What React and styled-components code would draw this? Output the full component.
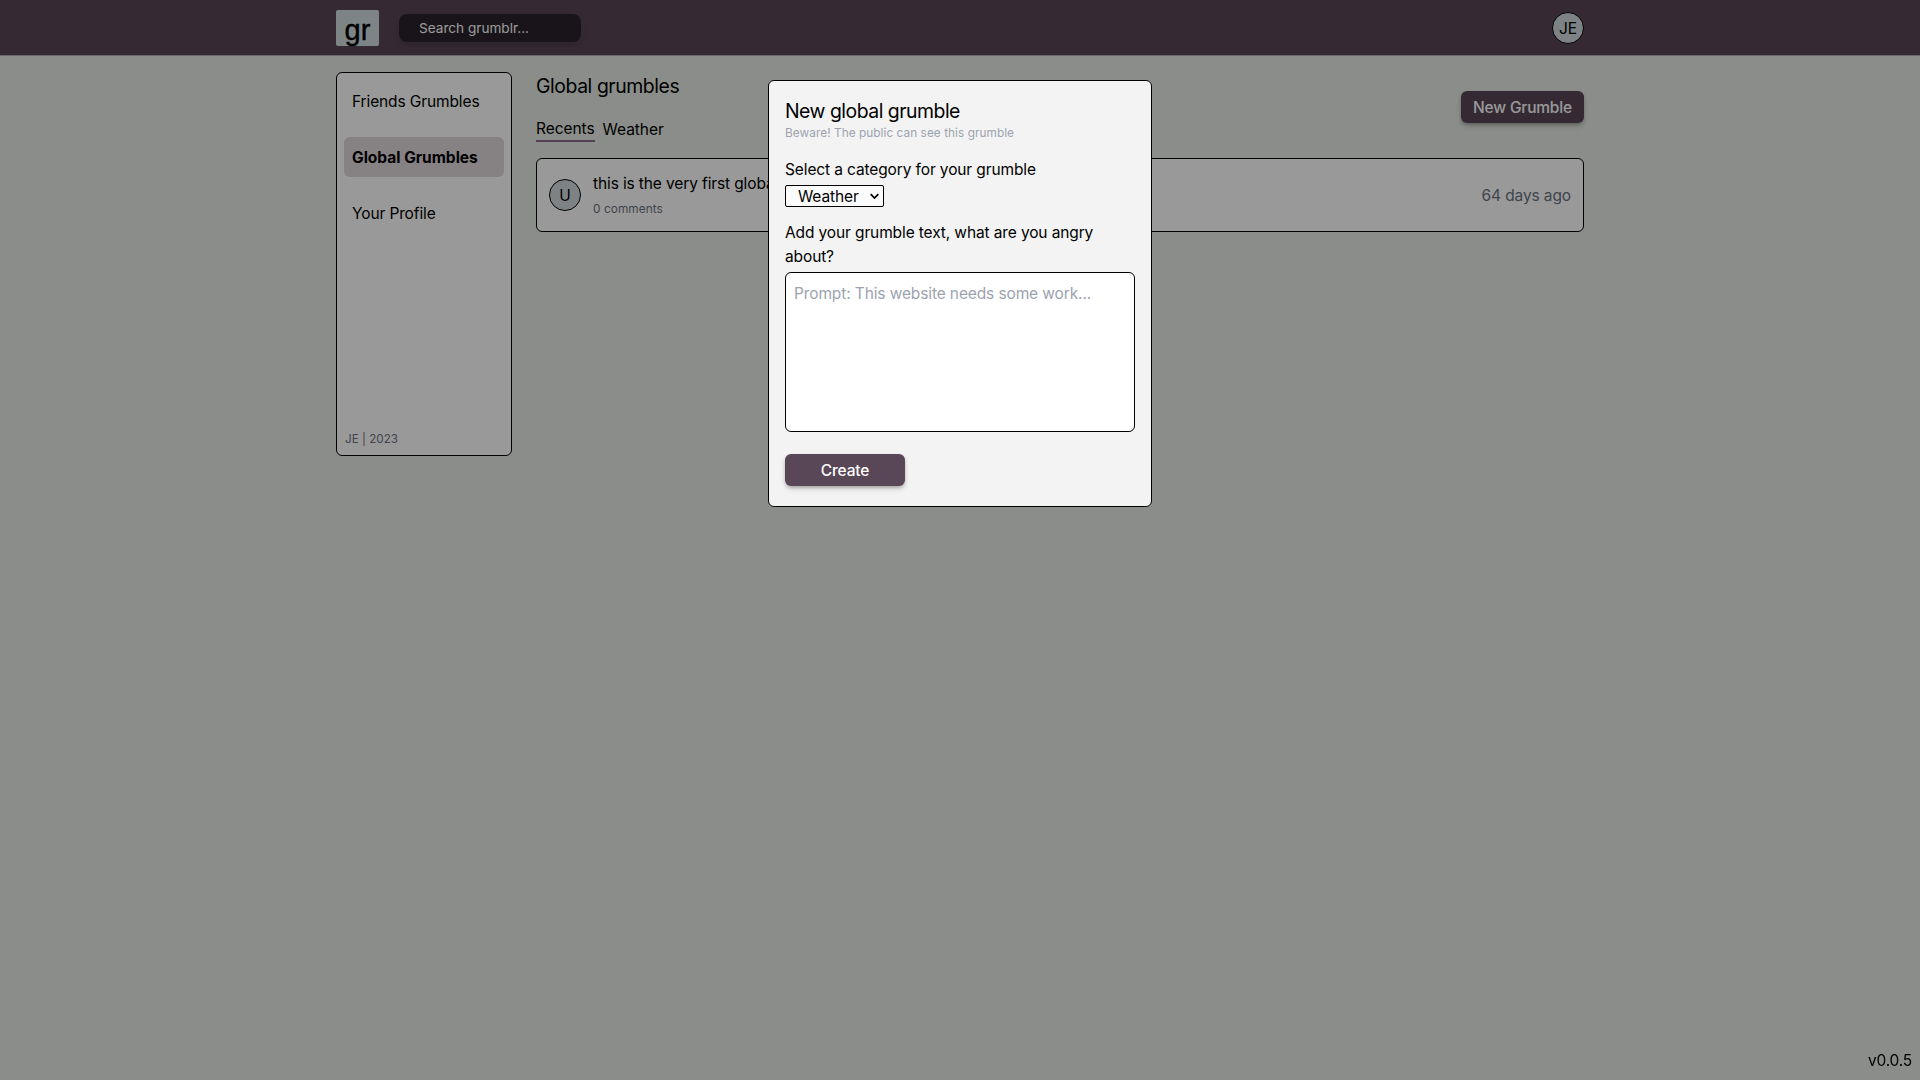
import React from "react";
import styled, { createGlobalStyle } from "styled-components";

const Global = createGlobalStyle`
  *, *::before, *::after { box-sizing: border-box; }
  body {
    margin: 0;
    background: #e6ebe4;
    color: #000;
    font-family: Inter, Roboto, "Liberation Sans", sans-serif;
    font-size: 15.5px;
    line-height: 25px;
    letter-spacing: -0.12px;
    overflow: hidden;
  }
  button, select, textarea, input { font: inherit; letter-spacing: inherit; color: inherit; margin: 0; }
`;

const Page = styled.div`
  min-height: 100vh;
  display: flex;
  flex-direction: column;
`;

const Header = styled.header`
  height: 56px;
  flex: none;
  background: #594657;
  border-bottom: 1px solid #b3acb3;
`;

const Container = styled.div`
  width: 1248px;
  margin: 0 auto;
`;

const HeaderInner = styled(Container)`
  height: 56px;
  display: flex;
  align-items: center;
`;

const Logo = styled.div`
  width: 43px;
  height: 36px;
  border-radius: 2px;
  background: #d1dddf;
  display: flex;
  justify-content: center;
  font-family: "Liberation Sans", Arial, sans-serif;
  font-size: 29px;
  line-height: 40px;
  letter-spacing: 0;
  -webkit-text-stroke: 0.4px #000;
`;

const Search = styled.input`
  width: 182px;
  height: 28px;
  margin-left: 20px;
  padding: 0 20px;
  border: 0;
  border-radius: 8px;
  background: #2b222b;
  font-size: 13.6px;
  letter-spacing: 0;
  box-shadow: 0 4px 6px -1px rgba(0, 0, 0, 0.15);
  &::placeholder { color: #fff; opacity: 1; }
`;

const Avatar = styled.div`
  width: 32px;
  height: 32px;
  flex: none;
  margin-left: ${(p) => (p.$end ? "auto" : 0)};
  padding-top: 1px;
  border: 1px solid #000;
  border-radius: 50%;
  background: #d1d9dd;
  display: flex;
  align-items: center;
  justify-content: center;
`;

const Columns = styled(Container)`
  display: flex;
  align-items: flex-start;
  gap: 24px;
  padding-top: 16px;
`;

const Sidebar = styled.nav`
  width: 176px;
  height: 384px;
  flex: none;
  display: flex;
  flex-direction: column;
  gap: 16px;
  padding: 8px 7px;
  border: 1px solid #000;
  border-radius: 6px;
  background: #fff;
`;

const NavItem = styled.a`
  height: 40px;
  padding: 8px;
  border-radius: 6px;
  background: ${(p) => (p.$active ? "#e0d7d9" : "transparent")};
  font-weight: ${(p) => (p.$active ? 700 : 400)};
  letter-spacing: ${(p) => (p.$active ? "0" : "-0.12px")};
`;

const Credit = styled.div`
  margin-top: auto;
  padding-left: 1px;
  color: #6b7280;
  font-size: 11.7px;
  line-height: 16px;
  letter-spacing: 0;
`;

const Main = styled.main`
  flex: 1;
  display: flex;
  flex-direction: column;
  gap: 16px;
`;

const TitleRow = styled.div`
  display: flex;
  align-items: center;
  justify-content: space-between;
`;

const Title = styled.h1`
  margin: 0;
  font-size: 19.4px;
  line-height: 28px;
  font-weight: 400;
  letter-spacing: ${(p) => (p.$page ? "-0.43px" : "-0.49px")};
`;

const Tabs = styled.div`
  display: flex;
  align-items: center;
  gap: 8px;
  margin-top: 16px;
`;

const Tab = styled.a`
  height: ${(p) => (p.$active ? 26 : 24)}px;
  border-bottom: ${(p) => (p.$active ? "2px solid #8b6b8b" : "0")};
  letter-spacing: -0.05px;
`;

const Button = styled.button`
  width: ${(p) => p.$width}px;
  height: 32px;
  padding: 1px 0 0;
  border: 0;
  border-radius: 6px;
  background: #594657;
  color: #fff;
  font-weight: 500;
  letter-spacing: -0.18px;
  box-shadow: 0 4px 6px -1px rgba(0, 0, 0, 0.1), 0 2px 4px -1px rgba(0, 0, 0, 0.35);
`;

const Card = styled.article`
  height: 74px;
  display: flex;
  align-items: center;
  gap: 12px;
  padding: 12px;
  border: 1px solid #000;
  border-radius: 6px;
  background: #fff;
`;

const CardBody = styled.div`
  flex: 1;
`;

const Message = styled.div`
  height: 24px;
`;

const Comments = styled.div`
  height: 24px;
  color: #6b7280;
  font-size: 11.8px;
  line-height: 28px;
  letter-spacing: 0.08px;
`;

const Age = styled.div`
  padding-top: 1px;
  color: #6b7280;
`;

const Version = styled.div`
  position: fixed;
  right: 8px;
  bottom: 7px;
  letter-spacing: -0.2px;
`;

const Overlay = styled.div`
  position: fixed;
  inset: 0;
  display: flex;
  align-items: flex-start;
  justify-content: center;
  padding-top: 80px;
  background: rgba(0, 0, 0, 0.4);
`;

const Modal = styled.form`
  width: 384px;
  height: 427px;
  display: flex;
  flex-direction: column;
  align-items: flex-start;
  padding: 16px;
  border: 1px solid #000;
  border-radius: 6px;
  background: #f3f3f3;
`;

const Warning = styled.div`
  margin-bottom: 16px;
  color: #9ca3af;
  font-size: 11.8px;
  line-height: 16px;
  letter-spacing: 0.06px;
`;

const Label = styled.label`
  display: block;
  padding-top: 1px;
  margin-bottom: -1px;
  line-height: 24px;
`;

const SelectBox = styled.div`
  width: 99px;
  height: 22px;
  margin: 4px 0 13px;
  padding: 1px 4px 0 12px;
  display: flex;
  align-items: center;
  justify-content: space-between;
  border: 1px solid #000;
  border-radius: 2px;
  background: #fbfbfb;
`;

const Text = styled.textarea`
  width: 350px;
  height: 160px;
  margin: 4px 0 22px;
  padding: 8px;
  border: 1px solid #000;
  border-radius: 6px;
  background: #fff;
  resize: none;
  letter-spacing: -0.12px;
  &::placeholder { color: #9ca3af; opacity: 1; }
`;

export default function App() {
  return (
    <>
      <Global />
      <Page>
        <Header>
          <HeaderInner>
            <Logo>gr</Logo>
            <Search placeholder="Search grumblr..." />
            <Avatar $end>JE</Avatar>
          </HeaderInner>
        </Header>
        <Columns>
          <Sidebar>
            <NavItem>Friends Grumbles</NavItem>
            <NavItem $active>Global Grumbles</NavItem>
            <NavItem>Your Profile</NavItem>
            <Credit>JE | 2023</Credit>
          </Sidebar>
          <Main>
            <TitleRow>
              <div>
                <Title $page>Global grumbles</Title>
                <Tabs>
                  <Tab $active>Recents</Tab>
                  <Tab>Weather</Tab>
                </Tabs>
              </div>
              <Button $width={123}>New Grumble</Button>
            </TitleRow>
            <Card>
              <Avatar>U</Avatar>
              <CardBody>
                <Message>this is the very first global</Message>
                <Comments>0 comments</Comments>
              </CardBody>
              <Age>64 days ago</Age>
            </Card>
          </Main>
        </Columns>
        <Version>v0.0.5</Version>
      </Page>
      <Overlay>
        <Modal>
          <Title>New global grumble</Title>
          <Warning>Beware! The public can see this grumble</Warning>
          <Label>Select a category for your grumble</Label>
          <SelectBox>
            Weather
            <svg width="9" height="7" viewBox="0 0 9 7" fill="none" stroke="#000" strokeWidth="1.7">
              <path d="M0.7 1.2 4.5 5 8.3 1.2" />
            </svg>
          </SelectBox>
          <Label>Add your grumble text, what are you angry about?</Label>
          <Text placeholder="Prompt: This website needs some work..." />
          <Button type="button" $width={120}>Create</Button>
        </Modal>
      </Overlay>
    </>
  );
}
